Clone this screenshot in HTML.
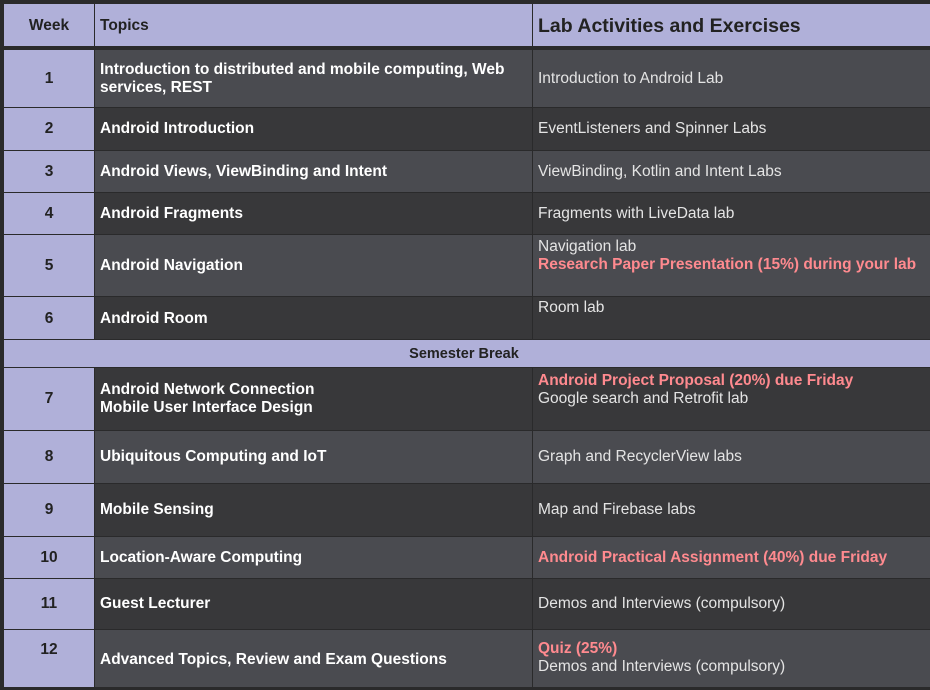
<!DOCTYPE html><html><head><style>
body{margin:0;width:930px;height:690px;background:#2a2a2b;position:relative;overflow:hidden;font-family:"Liberation Sans",Arial,sans-serif;font-size:15.5px}
.c{position:absolute;display:flex;flex-direction:column;justify-content:center;box-sizing:border-box;line-height:18px}
.w{left:4px;width:90px;background:#b0b0d9;color:#222;font-weight:bold;align-items:center;font-size:15.5px}
.t{left:95px;width:437px;padding-left:5px;color:#fff;font-weight:bold}
.l{left:533px;width:397px;padding-left:5px;color:#e4e4e4}
.L{background:#4a4b50}.D{background:#38383a}
.r{color:#ff8a8f;font-weight:bold}
.top{justify-content:flex-start}
</style></head><body>
<div class="c w" style="top:4px;height:42px;padding-top:2px">Week</div>
<div class="c t" style="top:4px;height:42px;background:#b0b0d9;color:#222;padding-top:2px">Topics</div>
<div class="c l" style="top:4px;height:42px;background:#b0b0d9;color:#222;font-weight:bold;font-size:19.5px;padding-top:2px">Lab Activities and Exercises</div>

<div class="c w" style="top:50px;height:57px">1</div>
<div class="c t L" style="top:50px;height:57px">Introduction to distributed and mobile computing, Web services, REST</div>
<div class="c l L" style="top:50px;height:57px">Introduction to Android Lab</div>

<div class="c w" style="top:108px;height:42px">2</div>
<div class="c t D" style="top:108px;height:42px">Android Introduction</div>
<div class="c l D" style="top:108px;height:42px">EventListeners and Spinner Labs</div>

<div class="c w" style="top:151px;height:41px">3</div>
<div class="c t L" style="top:151px;height:41px">Android Views, ViewBinding and Intent</div>
<div class="c l L" style="top:151px;height:41px">ViewBinding, Kotlin and Intent Labs</div>

<div class="c w" style="top:193px;height:41px">4</div>
<div class="c t D" style="top:193px;height:41px">Android Fragments</div>
<div class="c l D" style="top:193px;height:41px">Fragments with LiveData lab</div>

<div class="c w" style="top:235px;height:61px">5</div>
<div class="c t L" style="top:235px;height:61px">Android Navigation</div>
<div class="c l L top" style="top:235px;height:61px;padding-top:3px">Navigation lab<span class="r">Research Paper Presentation (15%) during your lab</span></div>

<div class="c w" style="top:297px;height:42px;padding-top:2px">6</div>
<div class="c t D" style="top:297px;height:42px;padding-top:2px">Android Room</div>
<div class="c l D top" style="top:297px;height:42px;padding-top:2px">Room lab</div>

<div class="c" style="top:340px;left:4px;width:926px;height:27px;background:#b0b0d9;color:#222;font-weight:bold;font-size:14.5px;align-items:center;padding-right:6px">Semester Break</div>

<div class="c w" style="top:368px;height:62px">7</div>
<div class="c t D" style="top:368px;height:62px">Android Network Connection<br>Mobile User Interface Design</div>
<div class="c l D top" style="top:368px;height:62px;padding-top:4px"><span class="r">Android Project Proposal (20%) due Friday</span>Google search and Retrofit lab</div>

<div class="c w" style="top:431px;height:52px">8</div>
<div class="c t L" style="top:431px;height:52px">Ubiquitous Computing and IoT</div>
<div class="c l L" style="top:431px;height:52px">Graph and RecyclerView labs</div>

<div class="c w" style="top:484px;height:52px">9</div>
<div class="c t D" style="top:484px;height:52px">Mobile Sensing</div>
<div class="c l D" style="top:484px;height:52px">Map and Firebase labs</div>

<div class="c w" style="top:537px;height:41px">10</div>
<div class="c t L" style="top:537px;height:41px">Location-Aware Computing</div>
<div class="c l L" style="top:537px;height:41px"><span class="r">Android Practical Assignment (40%) due Friday</span></div>

<div class="c w" style="top:579px;height:50px">11</div>
<div class="c t D" style="top:579px;height:50px">Guest Lecturer</div>
<div class="c l D" style="top:579px;height:50px">Demos and Interviews (compulsory)</div>

<div class="c w top" style="top:630px;height:57px;padding-top:11px">12</div>
<div class="c t L" style="top:630px;height:57px;padding-top:2px">Advanced Topics, Review and Exam Questions</div>
<div class="c l L top" style="top:630px;height:57px;padding-top:10px"><span class="r">Quiz (25%)</span>Demos and Interviews (compulsory)</div>
</body></html>
